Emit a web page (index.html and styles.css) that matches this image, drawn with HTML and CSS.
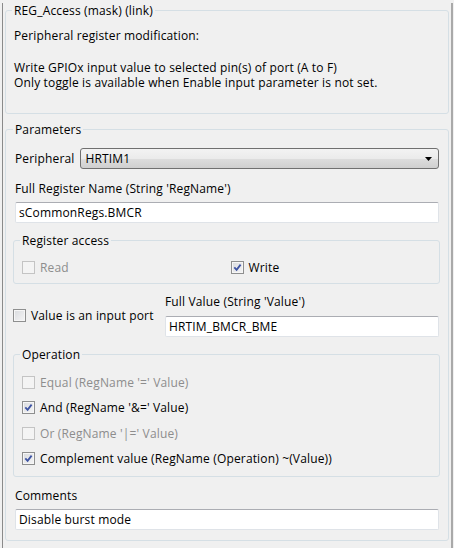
FILE: index.html
```html
<!DOCTYPE html>
<html>
<head>
<meta charset="utf-8">
<link rel="stylesheet" href="styles.css">
</head>
<body>
<div class="frame">
  <fieldset class="group info">
    <legend>REG_Access (mask) (link)</legend>
    <p>Peripheral register modification:</p>
    <p class="para">Write GPIOx input value to selected pin(s) of port (A to F)</p>
    <p>Only toggle is available when Enable input parameter is not set.</p>
  </fieldset>

  <fieldset class="group params">
    <legend>Parameters</legend>
    <div class="select-row">
      <span>Peripheral</span>
      <div class="select">
        <span>HRTIM1</span>
        <svg class="arrow" width="7" height="4" viewBox="0 0 7 4"><polygon points="0,0 7,0 3.5,4" fill="#000"/></svg>
      </div>
    </div>

    <div class="field-label">Full Register Name (String 'RegName')</div>
    <div class="input">sCommonRegs.BMCR</div>

    <fieldset class="sub access">
      <legend>Register access</legend>
      <div class="cols">
        <div class="check disabled"><span class="box"></span><span>Read</span></div>
        <div class="check"><span class="box checked"><svg width="9" height="9" viewBox="0 0 9 9"><path d="M1.3 4.4 L3.6 6.9 L7.6 1.6" fill="none" stroke="#3e54a3" stroke-width="1.8"/></svg></span><span>Write</span></div>
      </div>
    </fieldset>

    <div class="value-row">
      <div class="check outdent"><span class="box"></span><span>Value is an input port</span></div>
      <div class="value-col">
        <div class="label-tight">Full Value (String 'Value')</div>
        <div class="input">HRTIM_BMCR_BME</div>
      </div>
    </div>

    <fieldset class="sub operation">
      <legend>Operation</legend>
      <div class="rows">
        <div class="check disabled"><span class="box"></span><span>Equal (RegName '=' Value)</span></div>
        <div class="check"><span class="box checked"><svg width="9" height="9" viewBox="0 0 9 9"><path d="M1.3 4.4 L3.6 6.9 L7.6 1.6" fill="none" stroke="#3e54a3" stroke-width="1.8"/></svg></span><span>And (RegName '&amp;=' Value)</span></div>
        <div class="check disabled"><span class="box"></span><span>Or (RegName '|=' Value)</span></div>
        <div class="check"><span class="box checked"><svg width="9" height="9" viewBox="0 0 9 9"><path d="M1.3 4.4 L3.6 6.9 L7.6 1.6" fill="none" stroke="#3e54a3" stroke-width="1.8"/></svg></span><span>Complement value (RegName (Operation) ~(Value))</span></div>
      </div>
    </fieldset>

    <div class="field-label comments">Comments</div>
    <div class="input">Disable burst mode</div>
  </fieldset>
</div>
</body>
</html>
```

FILE: styles.css
```css
html, body {
  margin: 0;
  padding: 0;
}
body {
  background: #f0f0f0;
  font-family: "Open Sans", "Liberation Sans", sans-serif;
  font-size: 12px;
  line-height: 15px;
  letter-spacing: 0.15px;
  color: #000;
  width: 454px;
  height: 548px;
  overflow: hidden;
}
.frame {
  box-sizing: border-box;
  margin-left: 2px;
  width: 451px;
  height: 548px;
  border-left: 1px solid #8a8a8a;
  border-right: 2px solid #a9a9a9;
  padding: 0 2px;
}
fieldset {
  margin: 0;
  min-width: 0;
  border: 1px solid #d5dfe5;
  border-radius: 3px;
}
legend {
  padding: 0 2px;
  margin-left: -2px;
  line-height: 15px;
}
p {
  margin: 0;
  height: 15px;
  white-space: nowrap;
}
.info {
  margin-top: 3px;
  padding: 10px 8px 23px 8px;
}
.para {
  margin-top: 17px;
}
.params {
  margin-top: 8px;
  padding: 11px 9px 10px 9px;
}
.select-row {
  display: flex;
  align-items: center;
  gap: 6px;
}
.select {
  flex: 1;
  box-sizing: border-box;
  height: 21px;
  border: 1px solid #707070;
  border-radius: 3px;
  background: linear-gradient(#f3f3f3 0%, #ebebeb 50%, #dddddd 51%, #cfcfcf 100%);
  display: flex;
  align-items: center;
  justify-content: space-between;
  padding: 0 6px 0 4px;
}
.field-label {
  margin-top: 12px;
}
.label-tight {
  margin-bottom: 7px;
}
.input {
  box-sizing: border-box;
  height: 21px;
  margin-top: 6px;
  background: #fff;
  border: 1px solid #dfe3e8;
  border-top-color: #abadb3;
  border-radius: 2px;
  padding: 2px 3px 0 3px;
}
.value-col .input {
  margin-top: 0;
}
.sub {
  margin: 10px -1px 0 -2px;
}
.access {
  padding: 12px 0 8px 8px;
}
.cols {
  display: grid;
  grid-template-columns: 1fr 1fr;
}
.check {
  display: flex;
  align-items: center;
  gap: 5px;
  height: 15px;
}
.check.disabled {
  color: #8d8d8d;
}
.box {
  box-sizing: border-box;
  width: 13px;
  height: 13px;
  flex: none;
  border: 1px solid #8e8f8f;
  background: linear-gradient(135deg, #d9dbde 0%, #f5f5f6 100%);
  box-shadow: inset 0 0 0 1px #f6f6f6;
  display: flex;
  align-items: center;
  justify-content: center;
}
.check.disabled .box {
  border-color: #c4c4c4;
  background: #f4f4f4;
  box-shadow: none;
}
.value-row {
  display: grid;
  grid-template-columns: 150px 1fr;
  align-items: center;
  margin-top: 10px;
}
.outdent {
  margin-left: -2px;
}
.operation {
  padding: 13px 8px 10px 8px;
}
.rows {
  display: flex;
  flex-direction: column;
  gap: 10.4px;
}
.comments {
  margin-top: 11px;
}
```
